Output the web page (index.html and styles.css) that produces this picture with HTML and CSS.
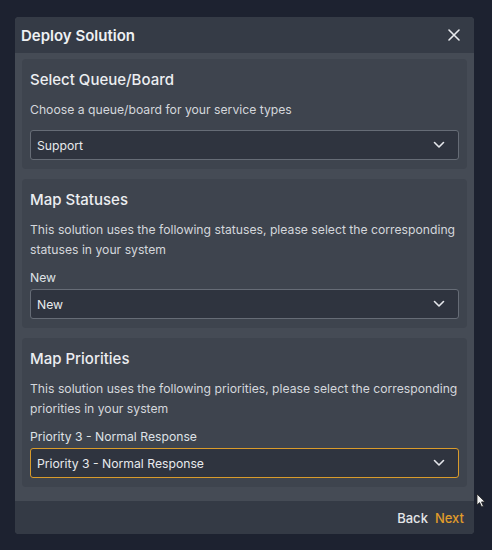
FILE: index.html
```html
<!DOCTYPE html>
<html>
<head>
<meta charset="utf-8">
<link rel="stylesheet" href="styles.css">
</head>
<body>
<div class="modal">
  <div class="modal-header">
    <h1 class="modal-title">Deploy Solution</h1>
    <button class="close" aria-label="Close">
      <svg width="12" height="12" viewBox="0 0 12 12"><path d="M1 1L11 11M11 1L1 11" stroke="#e8eaee" stroke-width="1.6" stroke-linecap="round"/></svg>
    </button>
  </div>
  <div class="modal-body">
    <section class="card">
      <h2 class="card-title">Select Queue/Board</h2>
      <p class="desc">Choose a queue/board for your service types</p>
      <div class="select first">
        <span>Support</span>
        <svg class="chev" width="12" height="8" viewBox="0 0 12 8"><path d="M1.5 1.5L6 6L10.5 1.5" fill="none" stroke="#e5e7eb" stroke-width="1.6" stroke-linecap="round" stroke-linejoin="round"/></svg>
      </div>
    </section>
    <section class="card">
      <h2 class="card-title">Map Statuses</h2>
      <p class="desc">This solution uses the following statuses, please select the corresponding statuses in your system</p>
      <label class="label">New</label>
      <div class="select">
        <span>New</span>
        <svg class="chev" width="12" height="8" viewBox="0 0 12 8"><path d="M1.5 1.5L6 6L10.5 1.5" fill="none" stroke="#e5e7eb" stroke-width="1.6" stroke-linecap="round" stroke-linejoin="round"/></svg>
      </div>
    </section>
    <section class="card">
      <h2 class="card-title">Map Priorities</h2>
      <p class="desc">This solution uses the following priorities, please select the corresponding priorities in your system</p>
      <label class="label">Priority 3 - Normal Response</label>
      <div class="select focused">
        <span>Priority 3 - Normal Response</span>
        <svg class="chev" width="12" height="8" viewBox="0 0 12 8"><path d="M1.5 1.5L6 6L10.5 1.5" fill="none" stroke="#e5e7eb" stroke-width="1.6" stroke-linecap="round" stroke-linejoin="round"/></svg>
      </div>
    </section>
  </div>
  <div class="modal-footer">
    <button class="btn back">Back</button>
    <button class="btn next">Next</button>
  </div>
</div>
<svg class="cursor" width="10" height="15" viewBox="0 0 10 15"><path d="M1 1L1 12L3.6 9.6L5.6 14L7.4 13.2L5.5 8.9L9 8.9Z" fill="#f2f2f2" stroke="#222" stroke-width="0.8"/></svg>
</body>
</html>
```

FILE: styles.css
```css
* { box-sizing: border-box; }
html, body { margin: 0; padding: 0; }
body {
  width: 492px;
  height: 550px;
  background: #1d2230;
  font-family: Inter, "Noto Sans", sans-serif;
  color: #e5e7eb;
  padding: 17px 0 0 15px;
  position: relative;
  overflow: hidden;
}
.modal {
  width: 459px;
  border-radius: 4px;
  overflow: hidden;
  background: #454b55;
}
.modal-header {
  height: 36px;
  background: #353b46;
  display: flex;
  align-items: center;
  justify-content: space-between;
  padding: 0 14px 0 6px;
}
.modal-title {
  margin: 0;
  font-size: 15px;
  font-weight: 600;
  color: #eef0f3;
}
.close {
  background: none;
  border: 0;
  padding: 0;
  display: flex;
}
.modal-body {
  padding: 6px 7px 14px;
  display: flex;
  flex-direction: column;
  gap: 10px;
}
.card {
  background: #3e444e;
  border-radius: 4px;
  padding: 10px 8px 9px;
  display: flex;
  flex-direction: column;
}
.card-title {
  margin: 0;
  font-size: 15px;
  line-height: 22px;
  font-weight: 500;
  color: #eceef1;
}
.desc {
  margin: 9px 0 0;
  font-size: 12.2px;
  line-height: 20px;
  color: #d4d7dc;
}
.label {
  margin-top: 8px;
  font-size: 12.2px;
  line-height: 20px;
  color: #dfe2e6;
}
.select {
  height: 30px;
  margin-top: 1px;
  background: #2f343f;
  border: 1px solid #666c76;
  border-radius: 3px;
  display: flex;
  align-items: center;
  justify-content: space-between;
  padding: 0 13px 0 6px;
  font-size: 12.2px;
  color: #e8eaed;
}
.select.first { margin-top: 10px; }
.select.focused { border: 1.5px solid #d99b2b; }
.modal-footer {
  height: 33px;
  background: #343a45;
  display: flex;
  align-items: center;
  justify-content: flex-end;
  gap: 7px;
  padding: 0 10px 0 0;
}
.btn {
  background: none;
  border: 0;
  padding: 0;
  font-family: Inter, "Noto Sans", sans-serif;
  font-size: 13px;
  font-weight: 500;
}
.back { color: #e3e5e9; }
.next { color: #e09c2a; }
.cursor {
  position: absolute;
  left: 476px;
  top: 493px;
}
```
